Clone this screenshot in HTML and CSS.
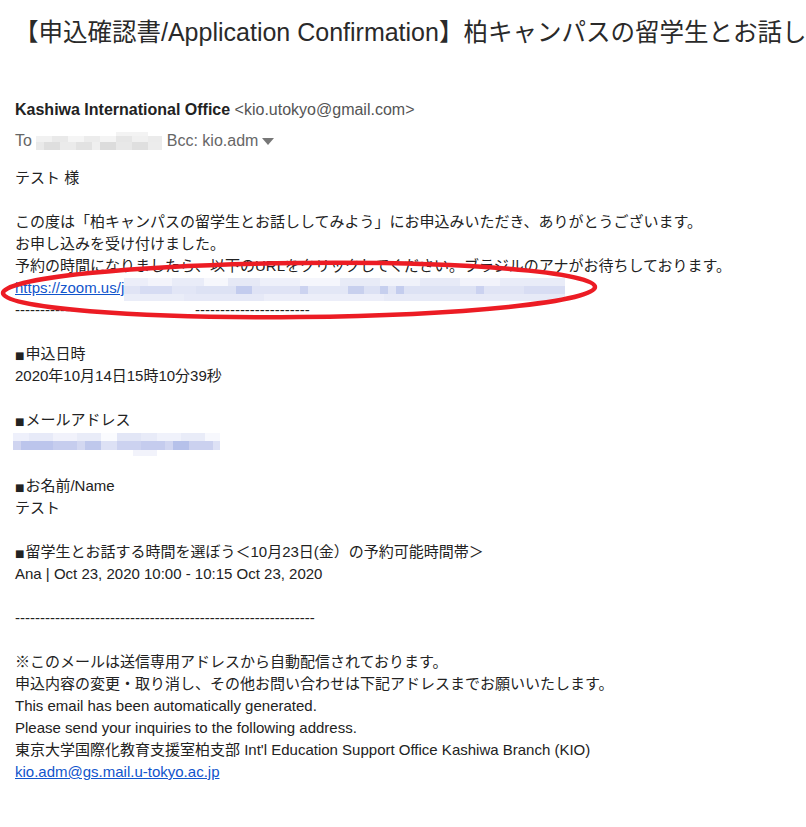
FILE: index.html
```html
<!DOCTYPE html>
<html lang="ja">
<head>
<meta charset="utf-8">
<title>Application Confirmation</title>
<link rel="stylesheet" href="styles.css">
</head>
<body>
<div class="mail">
  <h1 class="subject">【申込確認書<span class="latin">/Application Confirmation</span>】柏キャンパスの留学生とお話し</h1>
  <div class="head">
    <div class="from"><span class="name">Kashiwa International Office</span> <span class="addr">&lt;kio.utokyo@gmail.com&gt;</span></div>
    <div class="to">To <span class="blur blur-to"></span> Bcc: kio.adm<svg class="caret" width="12" height="7" viewBox="0 0 12 7"><polygon points="0,0 12,0 6,7"/></svg></div>
  </div>
  <div class="message">
    <div class="line">テスト 様</div>
    <div class="line"></div>
    <div class="line">この度は「柏キャンパスの留学生とお話ししてみよう」にお申込みいただき、ありがとうございます。</div>
    <div class="line">お申し込みを受け付けました。</div>
    <div class="line">予約の時間になりましたら、以下のURLをクリックしてください。ブラジルのアナがお待ちしております。</div>
    <div class="line"><a class="link" href="#">https://zoom.us/j</a><span class="blur blur-url"></span></div>
    <div class="line">----------------<span class="gap"></span>-----------------------</div>
    <div class="line"></div>
    <div class="line"><span class="sq">■</span>申込日時</div>
    <div class="line">2020年10月14日15時10分39秒</div>
    <div class="line"></div>
    <div class="line"><span class="sq">■</span>メールアドレス</div>
    <div class="line"><span class="blur blur-mail"></span></div>
    <div class="line"></div>
    <div class="line"><span class="sq">■</span>お名前/Name</div>
    <div class="line">テスト</div>
    <div class="line"></div>
    <div class="line"><span class="sq">■</span>留学生とお話する時間を選ぼう＜10月23日(金）の予約可能時間帯＞</div>
    <div class="line">Ana | Oct 23, 2020 10:00 - 10:15 Oct 23, 2020</div>
    <div class="line"></div>
    <div class="line">------------------------------------------------------------</div>
    <div class="line"></div>
    <div class="line">※このメールは送信専用アドレスから自動配信されております。</div>
    <div class="line">申込内容の変更・取り消し、その他お問い合わせは下記アドレスまでお願いいたします。</div>
    <div class="line">This email has been automatically generated.</div>
    <div class="line">Please send your inquiries to the following address.</div>
    <div class="line">東京大学国際化教育支援室柏支部 Int'l Education Support Office Kashiwa Branch (KIO)</div>
    <div class="line"><a class="link" href="#">kio.adm@gs.mail.u-tokyo.ac.jp</a></div>
  </div>
  <svg class="circle" width="604" height="66" viewBox="0 0 604 66">
    <ellipse cx="299" cy="33" rx="296" ry="27" transform="rotate(-0.6 299 33)"/>
  </svg>
</div>
</body>
</html>
```

FILE: styles.css
```css
html, body {
  margin: 0;
  padding: 0;
  background: #ffffff;
}

body {
  overflow: hidden;
}

.mail {
  position: relative;
  font-family: "Liberation Sans", "Noto Sans CJK JP", sans-serif;
  color: #222222;
}

.subject {
  margin: 0;
  padding: 16px 0 0 14px;
  font-size: 24.5px;
  line-height: 32px;
  font-weight: normal;
  color: #2a2a2a;
  white-space: nowrap;
}

.subject .latin {
  font-size: 25px;
}

.head {
  margin-top: 51px;
  padding-left: 15px;
  font-size: 16px;
  line-height: 20px;
}

.from .name {
  font-weight: bold;
  color: #222222;
}

.from .addr {
  color: #555555;
}

.to {
  margin-top: 11px;
  color: #666666;
  display: flex;
  align-items: center;
  white-space: pre;
}

.caret {
  margin-left: 4px;
  fill: #777777;
}

.message {
  margin-top: 16px;
  padding-left: 15px;
  font-size: 15px;
  line-height: 22px;
  color: #222222;
}

.line {
  height: 22px;
  white-space: nowrap;
}

.link {
  color: #1155cc;
  text-decoration: underline;
}

.sq {
  font-family: "DejaVu Sans", sans-serif;
  font-size: 10px;
  margin-right: 1px;
}

.gap {
  display: inline-block;
  width: 100px;
}

.blur {
  display: inline-block;
  vertical-align: middle;
}

.blur-to {
  width: 126px;
  height: 18px;
  background:
    linear-gradient(to right, #ffffff 0 80px, #f3f3f3 80px 112px, #ffffff 112px 126px) 0 0 / 100% 4px no-repeat,
    linear-gradient(to right, #f1f1f1 0 16px, #e9e9e9 16px 32px, #f5f5f5 32px 48px, #ececec 48px 64px, #f4f4f4 64px 80px, #e6e6e6 80px 96px, #f0f0f0 96px 112px, #ebebeb 112px 126px) 0 4px / 100% 6px no-repeat,
    linear-gradient(to right, #e9e9e9 0 8px, #dedede 8px 24px, #ebebeb 24px 40px, #e2e2e2 40px 56px, #efefef 56px 64px, #dcdcdc 64px 80px, #e8e8e8 80px 96px, #dfdfdf 96px 112px, #ececec 112px 126px) 0 10px / 100% 8px no-repeat;
}

.blur-url {
  width: 441px;
  height: 23px;
  vertical-align: top;
  margin-top: 1px;
  background:
    linear-gradient(to right, #eceef9 0 24px, #f3f4fb 24px 48px, #e9ecf8 48px 80px, #f6f7fc 80px 104px, #e6e9f6 104px 136px, #eef0fa 136px 176px, #f5f6fc 176px 216px, #e8ebf7 216px 256px, #f0f2fa 256px 296px, #e7eaf7 296px 336px, #f2f3fb 336px 376px, #e9ecf8 376px 441px) 0 0 / 100% 8px no-repeat,
    linear-gradient(to right, #e0e4f5 0 16px, #d6dcf3 16px 48px, #e2e6f6 48px 72px, #dde2f4 72px 112px, #c3ccee 112px 128px, #dfe3f5 128px 176px, #ccd3f0 176px 184px, #e3e7f6 184px 224px, #c8d0ee 224px 240px, #dce1f4 240px 256px, #c6cfee 256px 264px, #e1e5f5 264px 272px, #c4cdee 272px 280px, #dde2f4 280px 352px, #cbd2f0 352px 360px, #e0e4f5 360px 400px, #d8ddf3 400px 441px) 0 8px / 100% 8px no-repeat,
    linear-gradient(to right, #eaedf8 0 60px, #e6e9f7 60px 140px, #eceef9 140px 260px, #e7eaf7 260px 441px) 0 16px / 100% 7px no-repeat;
}

.blur-mail {
  width: 207px;
  height: 23px;
  margin-left: -2px;
  vertical-align: top;
  margin-top: 2px;
  background:
    linear-gradient(to right, #eef0fb 0 16px, #e7eaf8 16px 40px, #f1f2fb 40px 64px, #e9ecf8 64px 88px, #fafbfe 88px 104px, #e2e6f6 104px 128px, #e8ebf8 128px 144px, #f0f2fb 144px 168px, #e9ecf8 168px 192px, #f7f8fd 192px 207px) 0 0 / 100% 8px no-repeat,
    linear-gradient(to right, #cfd4f0 0 8px, #bcc5ec 8px 40px, #c6cdee 40px 64px, #d3d8f1 64px 72px, #bfc8ec 72px 88px, #dde1f5 88px 104px, #ccd2f0 104px 128px, #c5ccee 128px 152px, #d1d6f1 152px 160px, #b6c1ea 160px 176px, #cbd1ef 176px 200px, #dde1f5 200px 207px) 0 8px / 100% 9px no-repeat,
    linear-gradient(to right, transparent 0 120px, #f2f3fb 120px 144px, transparent 144px) 0 17px / 100% 6px no-repeat;
}

.circle {
  position: absolute;
  left: 0;
  top: 257px;
  overflow: visible;
}

.circle ellipse {
  fill: none;
  stroke: #ec1c24;
  stroke-width: 4.5;
}
```
